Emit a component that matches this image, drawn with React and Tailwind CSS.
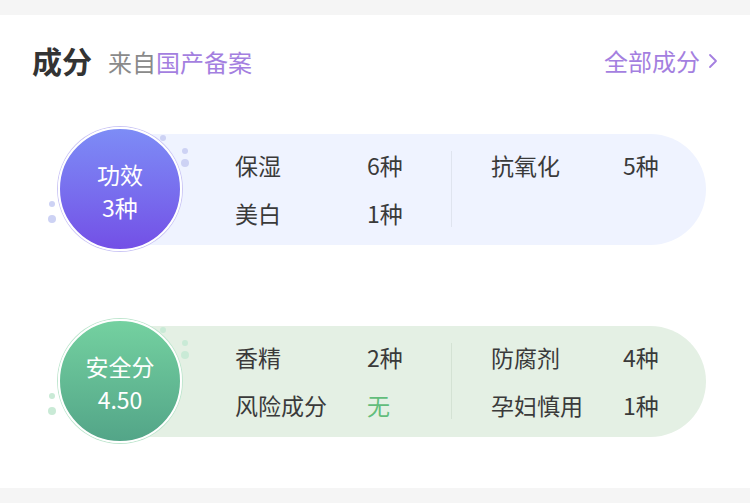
import React from 'react';

const font = { fontFamily: '"Noto Sans CJK SC", "Noto Sans", sans-serif' };

const rows = [
    {
        key: 'effect',
        title: '功效',
        sub: '3种',
        circle: 'bg-gradient-to-b from-[#7d8cf6] to-[#734fe6] ring-[#cbc6f5]',
        pill: 'bg-[#eff3ff]',
        dot: 'bg-[#cdd2f4]',
        divider: 'bg-[#dfe4ef]',
        left: [
            ['保湿', '6种'],
            ['美白', '1种'],
        ],
        right: [['抗氧化', '5种']],
    },
    {
        key: 'safe',
        title: '安全分',
        sub: '4.50',
        circle: 'bg-gradient-to-b from-[#74d1a0] to-[#53a588] ring-[#bfe6cf]',
        pill: 'bg-[#e4f0e4]',
        dot: 'bg-[#c9ead6]',
        divider: 'bg-[#d4e2d4]',
        left: [
            ['香精', '2种'],
            ['风险成分', '无', true],
        ],
        right: [
            ['防腐剂', '4种'],
            ['孕妇慎用', '1种'],
        ],
    },
];

const Cell = ({ items }) => (
    <div className="flex flex-col gap-4 h-[80px]">
        {items.map(([label, value, ok]) => (
            <div key={label} className="flex leading-[32px]">
                <span className="w-[132px]">{label}</span>
                <span className={ok ? 'text-[#62bd7b]' : ''}>{value}</span>
            </div>
        ))}
    </div>
);

const Row = ({ row }) => (
    <div className="relative flex items-center pl-[58px]">
        <span className={`absolute left-[160px] top-[8px] w-[6px] h-[6px] rounded-full ${row.dot}`}></span>
        <span className={`absolute left-[182px] top-[21px] w-[6px] h-[6px] rounded-full ${row.dot}`}></span>
        <span className={`absolute left-[181px] top-[32px] w-[8px] h-[8px] rounded-full ${row.dot}`}></span>
        <span className={`absolute left-[49px] top-[74px] w-[6px] h-[6px] rounded-full ${row.dot}`}></span>
        <span className={`absolute left-[48px] top-[88px] w-[8px] h-[8px] rounded-full ${row.dot}`}></span>
        <div
            className={`relative z-10 w-[124px] h-[124px] shrink-0 rounded-full border-2 border-white ring-1 flex flex-col items-center justify-center pt-[3px] text-white text-[23px] leading-[33px] ${row.circle}`}
        >
            <span>{row.title}</span>
            <span>{row.sub}</span>
        </div>
        <div
            className={`-ml-[62px] w-[586px] h-[111px] rounded-r-full flex items-center pl-[115px] text-[23px] text-[#3a3a3a] ${row.pill}`}
        >
            <div className="w-[216px]">
                <Cell items={row.left} />
            </div>
            <div className={`w-px h-[76px] ${row.divider}`}></div>
            <div className="pl-[39px]">
                <Cell items={row.right} />
            </div>
        </div>
    </div>
);

export default function App() {
    return (
        <div className="w-[750px] h-[503px] bg-[#f5f5f5] pt-[15px] overflow-hidden" style={font}>
            <div className="bg-white h-[473px] px-[32px] pt-[30px]">
                <div className="flex items-center justify-between h-[30px]">
                    <div className="flex items-center">
                        <span className="text-[30px] font-bold text-[#333333] leading-[30px]">成分</span>
                        <span className="ml-[16px] text-[24px] text-[#8a8a8a] leading-[30px] mt-[3px]">
                            来自<span className="text-[#a47fe0]">国产备案</span>
                        </span>
                    </div>
                    <div className="flex items-center text-[24px] text-[#a47fe0] leading-[30px] mt-[1px]">
                        <span>全部成分</span>
                        <svg className="ml-[8px]" width="10" height="16" viewBox="0 0 10 16" fill="none">
                            <path d="M2 2l6 6-6 6" stroke="#a47fe0" strokeWidth="1.8" strokeLinecap="round" strokeLinejoin="round" />
                        </svg>
                    </div>
                </div>
                <div className="-mx-[32px] mt-[52px] flex flex-col gap-[68px]">
                    {rows.map((r) => (
                        <Row key={r.key} row={r} />
                    ))}
                </div>
            </div>
        </div>
    );
}
